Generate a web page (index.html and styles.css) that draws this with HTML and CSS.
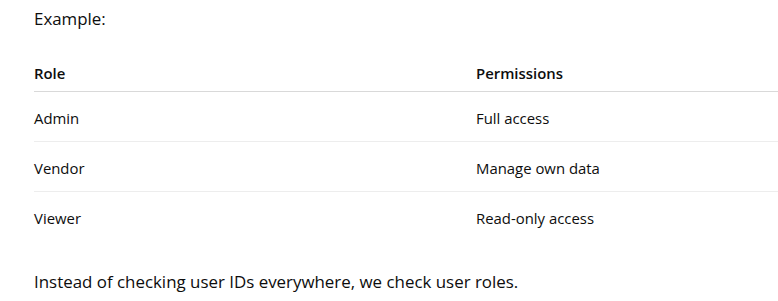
FILE: index.html
```html
<!DOCTYPE html>
<html lang="en">
<head>
    <meta charset="UTF-8">
    <meta name="viewport" content="width=device-width, initial-scale=1.0">
    <title>Roles</title>
    <link rel="stylesheet" href="styles.css">
</head>
<body>
    <main class="answer">
        <p class="lead">Example:</p>

        <table class="roles">
            <colgroup>
                <col class="col-role">
                <col>
            </colgroup>
            <thead>
                <tr>
                    <th>Role</th>
                    <th>Permissions</th>
                </tr>
            </thead>
            <tbody>
                <tr>
                    <td>Admin</td>
                    <td>Full access</td>
                </tr>
                <tr>
                    <td>Vendor</td>
                    <td>Manage own data</td>
                </tr>
                <tr>
                    <td>Viewer</td>
                    <td>Read-only access</td>
                </tr>
            </tbody>
        </table>

        <p class="note">Instead of checking user IDs everywhere, we check user roles.</p>
    </main>
</body>
</html>
```
FILE: styles.css
```css
body {
    margin: 0;
    padding: 0;
    background-color: #ffffff;
    color: #0d0d0d;
    font-family: 'Open Sans', Arial, sans-serif;
    overflow: hidden;
}
.answer {
    padding: 5px 0 0 34px;
}
.lead, .note {
    margin: 0;
    font-size: 16.9px;
    line-height: 28px;
}
.note {
    margin-top: 27px;
}
.roles {
    margin-top: 20px;
    width: 760px;
    table-layout: fixed;
    border-collapse: collapse;
    font-size: 14.9px;
    line-height: 25px;
}
.col-role {
    width: 434px;
}
.roles th {
    text-align: left;
    font-weight: 600;
    padding: 8px 8px 5px;
    border-bottom: 1px solid #d9d9d9;
}
.roles td {
    padding: 14px 8px 10px;
    border-bottom: 1px solid #ededed;
}
.roles tbody tr:last-child td {
    border-bottom: none;
}
.roles th:first-child, .roles td:first-child {
    padding-left: 0;
}
```
